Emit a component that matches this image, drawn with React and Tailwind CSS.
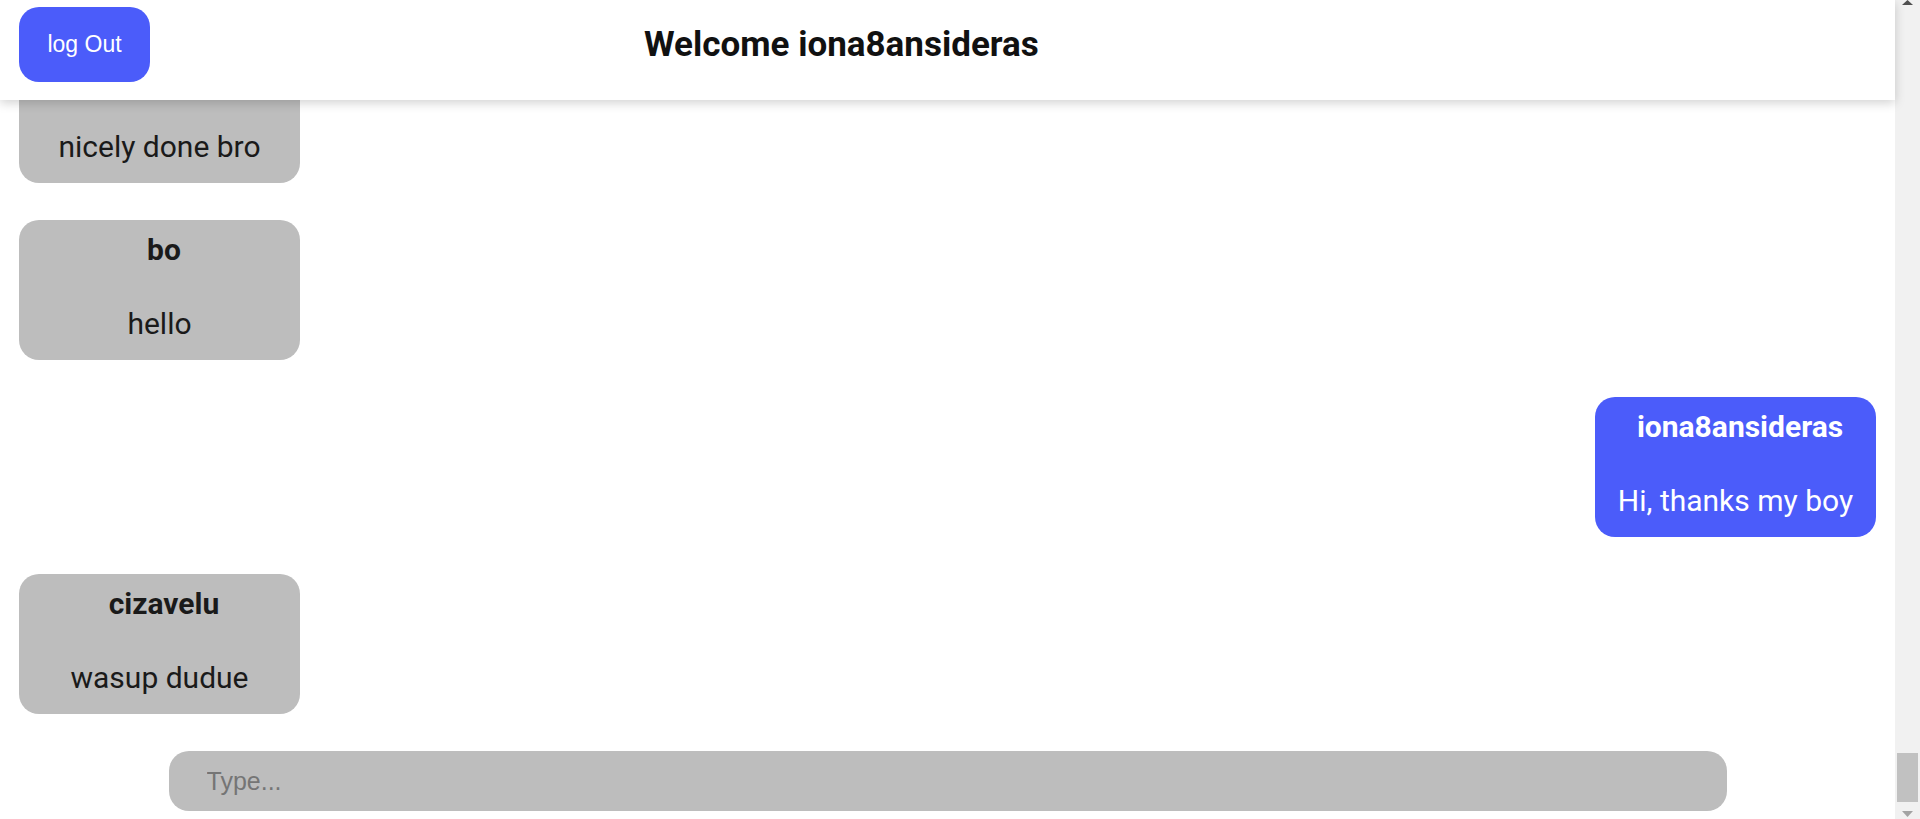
const messages = [
  { id: 1, user: 'cizavelu', text: 'nicely done bro', mine: false },
  { id: 2, user: 'bo', text: 'hello', mine: false },
  { id: 3, user: 'iona8ansideras', text: 'Hi, thanks my boy', mine: true },
  { id: 4, user: 'cizavelu', text: 'wasup dudue', mine: false },
];

const Bubble = ({ msg }) => (
  <div
    className={`w-[281px] h-[140px] shrink-0 rounded-[20px] pt-[12px] text-center font-['Roboto',sans-serif] text-[30px] leading-[35px] ${
      msg.mine ? 'self-end bg-[#4b5cfa] text-white' : 'self-start bg-[#bdbdbd] text-[#1a1a1a]'
    }`}
  >
    <p className="pl-[9px] font-bold">{msg.user}</p>
    <p className="mt-[39px]">{msg.text}</p>
  </div>
);

const ScrollTrack = () => (
  <div className="w-[25px] h-screen shrink-0 bg-[#f1f1f1] flex flex-col items-center">
    {/* up arrow */}
    <svg width="11" height="5" viewBox="0 0 11 5" className="shrink-0">
      <polygon points="5.5,0 11,5 0,5" fill="#505050" />
    </svg>
    <div className="flex-1" />
    <div className="w-[21px] h-[49px] bg-[#c1c1c1] shrink-0" />
    <svg width="11" height="6" viewBox="0 0 11 6" className="mt-[9px] mb-[2px] shrink-0">
      <polygon points="0,0 11,0 5.5,6" fill="#a3a3a3" />
    </svg>
  </div>
);

export default function App() {
  return (
    <div className="flex h-screen w-full overflow-hidden bg-white">
      <div className="flex flex-1 min-w-0 flex-col">
        {/* Header */}
        <header className="relative z-10 flex h-[100px] shrink-0 items-start bg-white pl-[19px] pt-[7px] shadow-[0_3px_10px_rgba(0,0,0,0.18)]">
          <div className="flex items-center">
            <button className="w-[131px] h-[75px] rounded-[20px] bg-[#4b5cfa] text-white font-['Liberation_Sans',Arial,sans-serif] text-[23px]">
              log Out
            </button>
            <h1 className="ml-[494px] mt-[1px] font-['Roboto',sans-serif] font-bold text-[35px] text-[#111]">
              Welcome iona8ansideras
            </h1>
          </div>
        </header>

        {/* Messages */}
        <main className="flex flex-1 min-h-0 flex-col justify-end gap-[37px] overflow-hidden px-[19px]">
          {messages.map((m) => (
            <Bubble key={m.id} msg={m} />
          ))}
        </main>

        {/* Input */}
        <footer className="flex shrink-0 justify-center pt-[37px] pb-[8px]">
          <input
            type="text"
            placeholder="Type..."
            className="w-[1558px] h-[60px] rounded-[20px] bg-[#bdbdbd] pl-[38px] font-['Liberation_Sans',Arial,sans-serif] text-[25px] text-[#1a1a1a] placeholder:text-[#757575] outline-none"
          />
        </footer>
      </div>
      <ScrollTrack />
    </div>
  );
}
